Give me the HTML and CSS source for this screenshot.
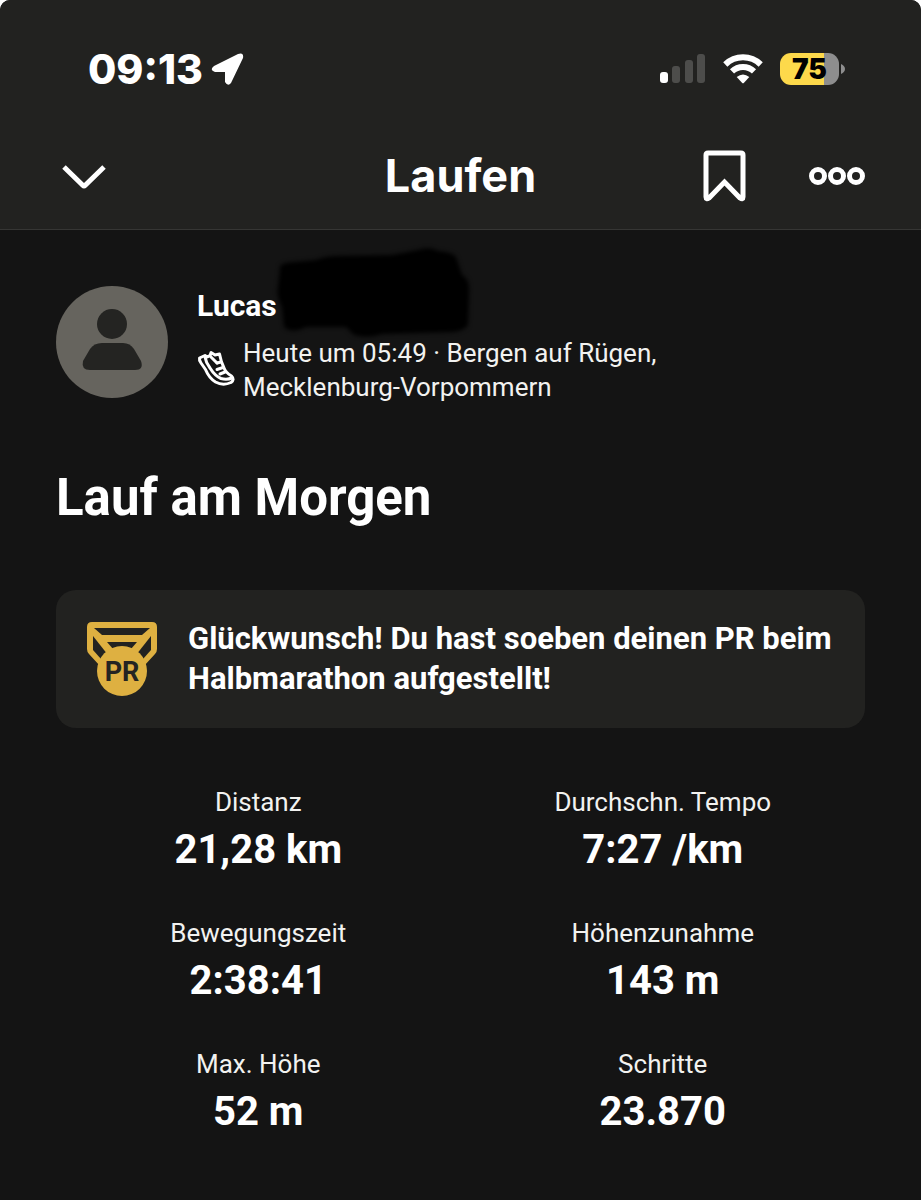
FILE: index.html
```html
<!DOCTYPE html>
<html lang="de">
<head>
    <meta charset="UTF-8">
    <meta name="viewport" content="width=device-width, initial-scale=1">
    <title>Lauf am Morgen</title>
    <link rel="stylesheet" href="styles.css">
</head>
<body>
    <div class="app">
        <header class="topbar">
            <div class="status">
                <div class="status-left">
                    <span class="clock">09:13</span>
                    <svg class="location" viewBox="0 0 34 34" width="34" height="34" aria-hidden="true">
                        <path d="M3 14 L27 2 Q33 0 32 6 L20 31 Q17 35 14 30 L14 20 L4 20 Q-2 18 3 14Z" fill="#fff"/>
                    </svg>
                </div>
                <div class="status-right">
                    <svg viewBox="0 0 46 30" width="46" height="30" aria-hidden="true">
                        <rect x="0" y="18" width="8" height="11" rx="3" fill="#fff"/>
                        <rect x="12" y="12" width="8" height="17" rx="3" fill="#4d4d4b"/>
                        <rect x="25" y="6" width="8" height="23" rx="3" fill="#4d4d4b"/>
                        <rect x="37" y="0" width="8" height="29" rx="3" fill="#4d4d4b"/>
                    </svg>
                    <svg viewBox="0 0 40 30" width="40" height="30" aria-hidden="true">
                        <g fill="none" stroke="#fff" stroke-width="6">
                            <path d="M2.3 10.5 A25.5 25.5 0 0 1 37.7 10.5"/>
                            <path d="M9 17.4 A16 16 0 0 1 31 17.4"/>
                        </g>
                        <path d="M13.7 23 Q20 18 26.3 23 L21 28.8 Q20 29.8 19 28.8Z" fill="#fff"/>
                    </svg>
                    <div class="battery">
                        <span class="battery-level">75</span>
                        <svg viewBox="0 0 4 10" width="4" height="10" aria-hidden="true">
                            <path d="M0 0 Q4 2 4 5 T0 10Z" fill="#8e8e8e"/>
                        </svg>
                    </div>
                </div>
            </div>
            <nav class="nav">
                <button class="icon-btn" type="button" aria-label="Zurück">
                    <svg viewBox="0 0 56 56" width="56" height="56">
                        <path d="M8 19 L27 37.5 Q28 38.5 29 37.5 L48 19" fill="none" stroke="#fff" stroke-width="5"/>
                    </svg>
                </button>
                <h1 class="nav-title">Laufen</h1>
                <div class="nav-actions">
                    <button class="icon-btn" type="button" aria-label="Speichern">
                        <svg viewBox="0 0 56 56" width="56" height="56">
                            <path d="M11 5H44Q46 5 46 7V49Q46 52 43 50L27.5 34L12 50Q9 52 9 49V7Q9 5 11 5Z" fill="none" stroke="#fff" stroke-width="5"/>
                        </svg>
                    </button>
                    <button class="icon-btn" type="button" aria-label="Mehr">
                        <svg viewBox="0 0 56 56" width="56" height="56">
                            <g fill="none" stroke="#fff" stroke-width="5">
                                <circle cx="9" cy="28" r="6.5"/>
                                <circle cx="28" cy="28" r="6.5"/>
                                <circle cx="47" cy="28" r="6.5"/>
                            </g>
                        </svg>
                    </button>
                </div>
            </nav>
        </header>

        <main class="content">
            <section class="athlete">
                <svg class="avatar" viewBox="0 0 112 112" width="112" height="112" aria-hidden="true">
                    <circle cx="56" cy="56" r="56" fill="#66645e"/>
                    <circle cx="56" cy="38" r="15" fill="#242422"/>
                    <path d="M46 57H67Q74 57 78 63L85 75Q88 84 79 84H34Q25 84 27 75L34 63Q38 57 46 57Z" fill="#242422"/>
                </svg>
                <div class="athlete-info">
                    <div class="athlete-name">
                        Lucas
                        <svg class="scribble" viewBox="0 0 200 96" width="200" height="96" aria-hidden="true">
                            <path d="M8 22 Q6 16 22 15 L44 13 Q54 9 66 9 L120 8 L146 3 Q158 -1 166 4 Q180 5 184 10 L190 28 Q198 32 197 46 L196 78 Q192 84 180 85 L110 87 Q96 92 82 88 L74 80 L34 80 Q20 87 12 80 L10 60 Q4 48 6 40Z" fill="#000"/>
                        </svg>
                    </div>
                    <div class="athlete-meta">
                        <svg class="shoe" viewBox="0 0 38 38" width="38" height="38" aria-hidden="true">
                            <g fill="none" stroke="#fff" stroke-width="3" stroke-linejoin="round" stroke-linecap="round">
                                <path d="M2.5 7 L8 4.500 L10 6 Q14 5 14 1.500 L18 4 L22.500 3 Q24 11 27 17 Q29 22 34.500 25 Q38 28.500 34 31.500 Q26 35 18.500 31 Q12 27 8.500 18.500 L4 12 Q2 9 2.500 7Z"/>
                                <path d="M8 6 Q9 12 13 17 Q18 25 24 27.500 Q30 29 35 27"/>
                                <path d="M20 12 L24 11 M20 18.500 L26 16.500 M23 23 L28 21"/>
                                <path d="M14 6 L20 12"/>
                            </g>
                        </svg>
                        <p class="meta-text">Heute um 05:49 · Bergen auf Rügen,<br>Mecklenburg-Vorpommern</p>
                    </div>
                </div>
            </section>

            <h2 class="activity-title">Lauf am Morgen</h2>

            <section class="achievement">
                <svg class="medal" viewBox="0 0 72 76" width="72" height="76" aria-hidden="true">
                    <path d="M6 1H66Q71 1 71 6V28Q71 31 69 33L58 45H14L3 33Q1 31 1 28V6Q1 1 6 1Z" fill="#deb041"/>
                    <g fill="#222220">
                        <path d="M8 7H64L56 14H16Z"/>
                        <path d="M21 21H51L45 28H27Z"/>
                        <path d="M7 15L22 34L15 38L7 29Z"/>
                        <path d="M65 15L50 34L57 38L65 29Z"/>
                    </g>
                    <circle cx="36" cy="50" r="25" fill="#deb041"/>
                    <text class="medal-text" x="36" y="60" text-anchor="middle">PR</text>
                </svg>
                <p class="achievement-text">Glückwunsch! Du hast soeben deinen PR beim Halbmarathon aufgestellt!</p>
            </section>

            <dl class="stats">
                <div class="stat">
                    <dt>Distanz</dt>
                    <dd>21,28 km</dd>
                </div>
                <div class="stat">
                    <dt>Durchschn. Tempo</dt>
                    <dd>7:27 /km</dd>
                </div>
                <div class="stat">
                    <dt>Bewegungszeit</dt>
                    <dd>2:38:41</dd>
                </div>
                <div class="stat">
                    <dt>Höhenzunahme</dt>
                    <dd>143 m</dd>
                </div>
                <div class="stat">
                    <dt>Max. Höhe</dt>
                    <dd>52 m</dd>
                </div>
                <div class="stat">
                    <dt>Schritte</dt>
                    <dd>23.870</dd>
                </div>
            </dl>
        </main>
    </div>
</body>
</html>
```

FILE: styles.css
```css
* {
    box-sizing: border-box;
}
body {
    margin: 0;
    background: #fff;
    color: #fff;
    font-family: Roboto, sans-serif;
}
h1, h2, p, dl, dd {
    margin: 0;
}
svg {
    display: block;
    flex: none;
}
.app {
    min-height: 100vh;
    background: #141414;
    border-radius: 10px 10px 0 0;
    overflow: hidden;
}

/* status bar + navigation */
.topbar {
    background: #222220;
    border-bottom: 1px solid #363634;
    font-family: Inter, sans-serif;
}
.status {
    display: flex;
    justify-content: space-between;
    align-items: center;
    height: 137px;
    padding: 0 76px 0 88px;
}
.status-left {
    display: flex;
    align-items: center;
    gap: 8px;
}
.clock {
    font-size: 41px;
    font-weight: 800;
}
.status-right {
    display: flex;
    align-items: center;
    gap: 17px;
}
.battery {
    display: flex;
    align-items: center;
    gap: 2px;
}
.battery-level {
    width: 59px;
    border-radius: 11px;
    background: linear-gradient(to right, #fdd94b 75%, #8e8e8e 75%);
    color: #000;
    font-size: 28px;
    font-weight: 900;
    line-height: 32px;
    text-align: center;
}
.nav {
    display: grid;
    grid-template-columns: 1fr auto 1fr;
    align-items: center;
    height: 92px;
    padding: 0 56px 14px;
}
.nav-title {
    font-size: 45px;
    font-weight: 700;
    line-height: 54px;
}
.nav-actions {
    display: flex;
    justify-content: flex-end;
    gap: 56px;
}
.icon-btn {
    width: 56px;
    padding: 0;
    border: none;
    background: none;
    cursor: pointer;
}

/* activity */
.content {
    padding: 56px;
}
.athlete {
    display: flex;
    gap: 29px;
}
.athlete-name {
    position: relative;
    font-size: 30px;
    font-weight: 700;
    line-height: 40px;
}
.scribble {
    position: absolute;
    left: 75px;
    top: -39px;
    filter: blur(2px);
}
.athlete-meta {
    display: flex;
    align-items: center;
    gap: 8px;
    margin-top: 10px;
}
.meta-text {
    color: #f2f2f0;
    font-size: 26px;
    line-height: 34px;
}
.activity-title {
    margin-top: 62px;
    font-size: 51px;
    font-weight: 700;
    line-height: 64px;
}
.achievement {
    display: flex;
    align-items: center;
    gap: 30px;
    margin-top: 60px;
    padding: 29px 28px 29px 30px;
    border-radius: 20px;
    background: #222220;
}
.achievement-text {
    font-size: 31px;
    font-weight: 700;
    line-height: 40px;
}
.medal-text {
    fill: #242422;
    font-size: 27px;
    font-weight: 700;
}
.stats {
    display: grid;
    grid-template-columns: 1fr 1fr;
    row-gap: 43px;
    margin-top: 58px;
    text-align: center;
}
.stat dt {
    color: #f2f2f0;
    font-size: 26px;
    line-height: 32px;
}
.stat dd {
    margin-top: 8px;
    font-size: 40px;
    font-weight: 700;
    line-height: 48px;
}
```
